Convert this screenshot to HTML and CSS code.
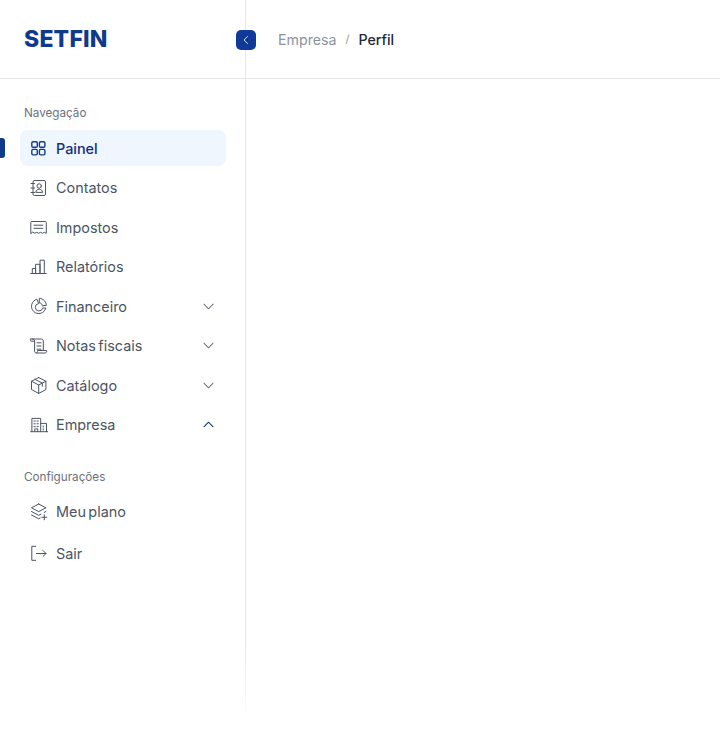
FILE: index.html
```html
<!DOCTYPE html>
<html lang="pt">
<head>
<meta charset="utf-8">
<title>Setfin</title>
<link rel="stylesheet" href="styles.css">
</head>
<body>
<div class="app">
  <aside class="sidebar">
    <div class="brand"><span class="logo">SETFIN</span></div>
    <nav class="nav">
      <p class="nav-title">Navegação</p>
      <ul class="menu">
        <li class="item active">
          <span class="marker"></span>
          <svg class="icon" viewBox="0 0 18 18"><rect x="1.800" y="2.800" width="5.500" height="5.500" rx="1.300"/><rect x="9.400" y="2.800" width="5.500" height="5.500" rx="1.300"/><rect x="1.800" y="10.400" width="5.500" height="5.500" rx="1.300"/><rect x="9.400" y="10.400" width="5.500" height="5.500" rx="1.300"/></svg>
          <span class="label">Painel</span>
        </li>
        <li class="item">
          <svg class="icon" viewBox="0 0 18 18"><rect x="3" y="1.500" width="12.500" height="15" rx="1.500"/><circle cx="9.200" cy="7" r="2.200"/><path d="M5.800 13c.4-1.900 1.800-2.800 3.400-2.800s3 .9 3.400 2.800zM1 4.500h3.500M1 9h3.500M1 13.500h3.500"/></svg>
          <span class="label">Contatos</span>
        </li>
        <li class="item">
          <svg class="icon" viewBox="0 0 18 18"><path d="M.8 15.300V4.500a1 1 0 0 1 1-1h13.500a1 1 0 0 1 1 1v10.800l-1.900-1-1.900 1-1.900-1-1.900 1-1.900-1-1.900 1-1.900-1z"/><path d="M4 7.200h8.800M4 10.300h8.800"/></svg>
          <span class="label">Impostos</span>
        </li>
        <li class="item">
          <svg class="icon" viewBox="0 0 18 18"><path d="M.8 15.500h15.400M2.300 15.500v-5h3.300v5M5.600 15.500V6.300H10v9.200M10 15.500V2.200h4.300v13.300"/></svg>
          <span class="label">Relatórios</span>
        </li>
        <li class="item">
          <svg class="icon" viewBox="0 0 18 18"><path d="M6.500 2.300A7.300 7.300 0 1 0 15.800 11h-3.200a3.700 3.700 0 1 1-4.300-4.400z"/><path d="M9.700 1.300c3.700.3 6.600 3.500 6.600 7.200h-3c-.5 1.700-1 .3-1.300-.9-.4-1.200-1.400-1.700-2.300-1.700z"/></svg>
          <span class="label">Financeiro</span>
          <svg class="chevron" viewBox="0 0 12 12"><path d="M1 3.500l5 5 5-5"/></svg>
        </li>
        <li class="item">
          <svg class="icon" viewBox="0 0 18 18"><path d="M0 2h11.500c1.100 0 1.800.7 1.800 1.800v9.700h3.400v.7c0 1.100-.8 1.800-1.900 1.800H6.500c-1.100 0-1.900-.7-1.900-1.800V3.800C4.600 2.700 3.700 2 2.300 2M0 2v1c0 .7.500 1.200 1.200 1.200h3.400M7 5.800h4M7 9h4M7 12.200h4M6.400 16.200c.8-.5 1.300-1.300 1.300-2.700h5.600"/></svg>
          <span class="label">Notas fiscais</span>
          <svg class="chevron" viewBox="0 0 12 12"><path d="M1 3.500l5 5 5-5"/></svg>
        </li>
        <li class="item">
          <svg class="icon" viewBox="0 0 18 18"><path d="M8.700 1.600l7.200 3.600v8.400l-7.200 3.800-7.200-3.800V5.200l7.200-3.600zM1.500 5.200l7.200 3.800 7.200-3.800M8.700 9v8.400M5.100 3.400l7.200 3.700v3.200"/></svg>
          <span class="label">Catálogo</span>
          <svg class="chevron" viewBox="0 0 12 12"><path d="M1 3.500l5 5 5-5"/></svg>
        </li>
        <li class="item">
          <svg class="icon" viewBox="0 0 18 18"><path d="M.7 15.700h17M1.900 15.700V2.400h8.800v13.300M10.700 7.400h5.800v8.300M4 5h1.300M7 5h1.300M4 7.800h1.300M7 7.800h1.300M4 10.600h1.300M7 10.600h1.300M4.800 15.700v-2.800h3v2.800M13.200 10v1.200M13.200 12.800V14"/></svg>
          <span class="label">Empresa</span>
          <svg class="chevron open" viewBox="0 0 12 12"><path d="M1 8.500l5-5 5 5"/></svg>
        </li>
      </ul>
      <p class="nav-title second">Configurações</p>
      <ul class="menu settings">
        <li class="item">
          <svg class="icon" viewBox="0 0 18 18"><path d="M8.700 1l7.200 3.800-7.200 3.800-7.200-3.800L8.700 1zM1.500 8.500l7.200 3.800 2.300-1.200M1.500 12l7.200 3.800 1.500-.8M15.900 8.500l-1.700.9M14.300 11.800v5M11.800 14.300h5"/></svg>
          <span class="label">Meu plano</span>
        </li>
        <li class="item">
          <svg class="icon" viewBox="0 0 18 18"><path d="M5.700 2.300H1.800v14h3.900M6.500 9.500h9.500M13 6.500l3 3-3 3"/></svg>
          <span class="label">Sair</span>
        </li>
      </ul>
    </nav>
  </aside>
  <main class="main">
    <header class="topbar">
      <button class="toggle" type="button" aria-label="Recolher">
        <svg viewBox="0 0 10 12"><path d="M6.500 2.500L3 6l3.500 3.500"/></svg>
      </button>
      <span class="crumb">Empresa</span>
      <span class="sep">/</span>
      <span class="current">Perfil</span>
    </header>
  </main>
</div>
</body>
</html>
```

FILE: styles.css
```css
* { box-sizing: border-box; }
html, body { margin: 0; padding: 0; background: #fff; }
body { font-family: Inter, "Noto Sans", sans-serif; color: #4b5563; height: 730px; overflow: hidden; }
.app { display: flex; height: 720px; }
.sidebar { width: 246px; flex: none; position: relative; }
.sidebar::after { content: ""; position: absolute; top: 0; right: 0; bottom: 0; width: 1px; background: linear-gradient(to bottom, #e5e7eb 0, #e5e7eb 90%, #ffffff 100%); }
.brand { height: 79px; border-bottom: 1px solid #e5e7eb; display: flex; align-items: center; padding-left: 24px; }
.logo { font-size: 23px; font-weight: 800; letter-spacing: 0.2px; color: #0f3a8c; line-height: 1; }
.nav { padding: 26px 20px 0 20px; }
.nav-title { margin: 0 0 0 4px; font-size: 11.7px; line-height: 16px; color: #6b7280; font-weight: 400; }
.nav-title.second { margin-top: 26px; }
.menu { list-style: none; margin: 9px 0 0; padding: 0; display: flex; flex-direction: column; gap: 3.5px; width: 206px; }
.menu.settings { margin-top: 9px; gap: 5.5px; }
.item { position: relative; height: 36px; display: flex; align-items: center; padding: 0 12px 0 10px; border-radius: 8px; font-size: 14.4px; font-weight: 400; word-spacing: -1.6px; color: #4b5563; }
.item .label { margin-left: 8px; white-space: nowrap; }
.item.active { background: #eff6fe; color: #0f2f7a; font-weight: 550; }
.marker { position: absolute; left: -20px; top: 8px; width: 5px; height: 20px; border-radius: 0 3px 3px 0; background: #0f3a8c; }
.icon { width: 18px; height: 18px; flex: none; fill: none; stroke: #4b5563; stroke-width: 1; stroke-linecap: round; stroke-linejoin: round; }
.active .icon { stroke: #123a8e; stroke-width: 1.4; }
.chevron { width: 11px; height: 11px; margin-left: auto; flex: none; fill: none; stroke: #6b7280; stroke-width: 1.1; stroke-linecap: round; stroke-linejoin: round; }
.chevron.open { stroke: #0f2f7a; }
.main { flex: 1; min-width: 0; }
.topbar { position: relative; height: 79px; border-bottom: 1px solid #e5e7eb; display: flex; align-items: center; padding-left: 32px; font-size: 14.2px; }
.toggle { position: absolute; left: -10px; top: 30px; width: 20px; height: 20px; padding: 0; border: 0; border-radius: 5px; background: #0f3a9a; display: flex; align-items: center; justify-content: center; }
.toggle svg { width: 10px; height: 12px; fill: none; stroke: #dbe6ff; stroke-width: 1; stroke-linecap: round; stroke-linejoin: round; }
.crumb { color: #8b93a1; font-weight: 400; }
.sep { color: #8b93a1; font-size: 11px; margin: 0 9px 0 9px; }
.current { color: #1f2937; font-weight: 550; }
```
